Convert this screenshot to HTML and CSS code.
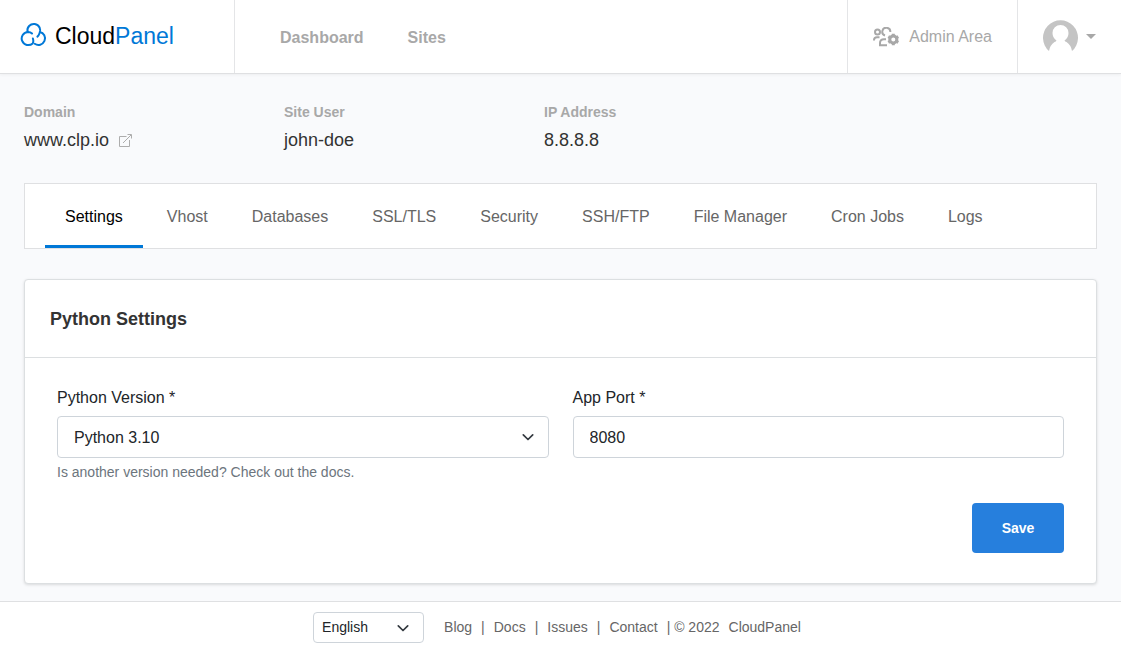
FILE: index.html
```html
<!DOCTYPE html>
<html lang="en">
<head>
<meta charset="utf-8">
<meta name="viewport" content="width=device-width, initial-scale=1">
<title>CloudPanel - Python Settings</title>
<link rel="stylesheet" href="styles.css">
</head>
<body>
<header class="header">
  <a class="logo" href="#">
    <svg class="logo-icon" viewBox="0 0 28 26" fill="none" stroke="#0078d7" stroke-width="2" stroke-linecap="round" aria-hidden="true">
      <path d="M7.600 9.800A6.400 6.400 0 1 1 19.400 11.500Q18.800 13.500 17.400 14.600"/>
      <path d="M12 11.500Q10.500 9.900 8 9.900A6.600 6.600 0 1 0 12.700 21.400Q13.800 19.500 12.900 16.500"/>
      <path d="M19.800 9.900A6.600 6.600 0 1 1 14.700 21.800"/>
    </svg>
    <span class="logo-text">Cloud<span class="logo-accent">Panel</span></span>
  </a>
  <nav class="main-nav">
    <a href="#">Dashboard</a>
    <a href="#">Sites</a>
  </nav>
  <a class="admin-link" href="#">
    <svg class="admin-icon" viewBox="0 0 27 20" fill="none" stroke="#a8a8a8" stroke-width="2" aria-hidden="true">
      <circle cx="4.500" cy="5" r="2.500"/>
      <path d="M1 13.500V13Q1 10.200 4 10.200H6.500"/>
      <path d="M12 8.500A4 4 0 1 1 17.300 5"/>
      <path d="M14 18.200H7V16Q7 12.200 11 12.200H13"/>
      <circle cx="20.300" cy="12.500" r="3.500" stroke-width="3"/>
      <path d="M20.300 6.800V9M20.300 16V18.200M15.300 9.600L17.300 10.800M23.300 14.200L25.300 15.400M15.300 15.400L17.300 14.200M23.300 10.800L25.300 9.600" stroke-width="3"/>
    </svg>
    <span>Admin Area</span>
  </a>
  <button class="user-menu" type="button" aria-label="User menu">
    <svg class="avatar" viewBox="0 0 35 36" aria-hidden="true">
      <path d="M6 32A17.500 17.500 0 1 1 29 32Q28 26 23.500 23Q22 22.500 21.500 21.500Q25.500 19 25.500 14A8 8 0 0 0 9.500 14Q9.500 19 13.500 21.500Q13 22.500 11.500 23Q7 26 6 32Z" fill="#c4c4c4"/>
    </svg>
    <span class="caret"></span>
  </button>
</header>

<main class="content">
  <dl class="site-info">
    <div>
      <dt>Domain</dt>
      <dd>www.clp.io
        <a class="external" href="#" aria-label="Open site"><svg viewBox="0 0 13 13" fill="none" stroke="#adadad" aria-hidden="true"><path d="M7.500 2.500H.5V12.500H10.500V6M4 9L12 1M8.500.500H12.500V4.500"/></svg></a>
      </dd>
    </div>
    <div>
      <dt>Site User</dt>
      <dd>john-doe</dd>
    </div>
    <div>
      <dt>IP Address</dt>
      <dd>8.8.8.8</dd>
    </div>
  </dl>

  <nav class="tabs">
    <a class="active" href="#" aria-current="page">Settings</a>
    <a href="#">Vhost</a>
    <a href="#">Databases</a>
    <a href="#">SSL/TLS</a>
    <a href="#">Security</a>
    <a href="#">SSH/FTP</a>
    <a href="#">File Manager</a>
    <a href="#">Cron Jobs</a>
    <a href="#">Logs</a>
  </nav>

  <section class="card">
    <h1 class="card-title">Python Settings</h1>
    <form class="card-body">
      <div class="fields">
        <div class="field">
          <label for="version">Python Version *</label>
          <div class="select-wrap">
            <select class="control" id="version"><option>Python 3.10</option></select>
            <svg class="chevron" viewBox="0 0 12 12" fill="none" stroke="#343a40" stroke-width="1.700" stroke-linecap="round" stroke-linejoin="round" aria-hidden="true"><path d="M1.300 3.800L6 8.500L10.700 3.800"/></svg>
          </div>
          <p class="help">Is another version needed? Check out the docs.</p>
        </div>
        <div class="field">
          <label for="port">App Port *</label>
          <input class="control" id="port" type="text" value="8080">
        </div>
      </div>
      <button class="save" type="button">Save</button>
    </form>
  </section>
</main>

<footer class="footer">
  <div class="select-wrap language">
    <select class="control" aria-label="Language"><option>English</option></select>
    <svg class="chevron" viewBox="0 0 12 12" fill="none" stroke="#343a40" stroke-width="1.700" stroke-linecap="round" stroke-linejoin="round" aria-hidden="true"><path d="M1.300 3.800L6 8.500L10.700 3.800"/></svg>
  </div>
  <div class="footer-links">
    <a href="#">Blog</a><span>|</span>
    <a href="#">Docs</a><span>|</span>
    <a href="#">Issues</a><span>|</span>
    <a href="#">Contact</a>
    <span class="copyright">| © 2022</span>
    <a href="#">CloudPanel</a>
  </div>
</footer>
</body>
</html>
```

FILE: styles.css
```css
* {
  box-sizing: border-box;
}

body {
  margin: 0;
  min-height: 100vh;
  display: flex;
  flex-direction: column;
  background: #f9fafc;
  color: #212529;
  font: 16px/24px "Liberation Sans", Arial, sans-serif;
}

a {
  color: inherit;
  text-decoration: none;
}

button,
input,
select {
  font: inherit;
  color: inherit;
}

.header {
  display: flex;
  height: 74px;
  background: #fff;
  border-bottom: 1px solid #dfe0e2;
  box-shadow: 0 1px 3px rgba(0, 0, 0, 0.05);
}

.logo {
  display: flex;
  align-items: center;
  gap: 7px;
  width: 235px;
  padding-left: 20px;
  border-right: 1px solid #e4e5e7;
}

.logo-icon {
  width: 28px;
  height: 26px;
  margin-bottom: 4px;
}

.logo-text {
  padding-bottom: 2px;
  color: #000;
  font-size: 23px;
}

.logo-accent {
  color: #0078d7;
}

.main-nav {
  flex: 1;
  display: flex;
  align-items: center;
  gap: 44px;
  padding: 2px 0 0 45px;
  color: #a8a8a8;
  font-weight: bold;
}

.admin-link {
  display: flex;
  align-items: center;
  gap: 9px;
  padding: 0 25px;
  border: solid #e4e5e7;
  border-width: 0 1px;
  color: #a8a8a8;
}

.admin-icon {
  width: 27px;
  height: 20px;
}

.user-menu {
  display: flex;
  align-items: center;
  gap: 8px;
  padding: 0 25px;
  border: 0;
  background: none;
}

.avatar {
  width: 35px;
  height: 36px;
}

.caret {
  border: 5px solid transparent;
  border-top-color: #a8a8a8;
  border-bottom: 0;
}

.content {
  flex: 1;
  padding: 26px 24px 16px;
}

.site-info {
  display: grid;
  grid-template-columns: repeat(auto-fill, 260px);
  margin: 0 0 29px;
}

.site-info dt {
  color: #a8a8a8;
  font-size: 14px;
  font-weight: bold;
}

.site-info dd {
  margin: 0;
  padding: 4px 0 2px;
  color: #333;
  font-size: 18px;
}

.external svg {
  width: 13px;
  height: 13px;
  margin-left: 5px;
  vertical-align: -1px;
}

.tabs {
  display: flex;
  gap: 4px;
  padding: 0 20px;
  background: #fff;
  border: 1px solid #dfe0e2;
  color: #666;
}

.tabs a {
  padding: 21px 20px 16px;
  border-bottom: 3px solid transparent;
}

.tabs .active {
  color: #000;
  border-bottom-color: #0078d7;
}

.card {
  margin-top: 30px;
  background: #fff;
  border: 1px solid #dcdfe1;
  border-radius: 4px;
  box-shadow: 0 1px 3px rgba(0, 0, 0, 0.13);
}

.card-title {
  margin: 0;
  padding: 27px 25px 26px;
  border-bottom: 1px solid #dcdfe1;
  color: #333;
  font-size: 18px;
  line-height: 24px;
}

.card-body {
  display: flex;
  flex-direction: column;
  padding: 28px 32px 30px;
}

.fields {
  display: grid;
  grid-template-columns: 1fr 1fr;
  gap: 24px;
}

.field label {
  display: block;
  margin-bottom: 6px;
}

.control {
  display: block;
  width: 100%;
  height: 42px;
  padding: 2px 16px 0;
  background: #fff;
  border: 1px solid #ced4da;
  border-radius: 4px;
  appearance: none;
}

.select-wrap {
  position: relative;
}

.chevron {
  position: absolute;
  right: 15px;
  top: 50%;
  width: 12px;
  height: 12px;
  margin-top: -6px;
  pointer-events: none;
}

.help {
  margin: 4px 0 0;
  color: #6c757d;
  font-size: 14px;
  line-height: 21px;
}

.save {
  align-self: flex-end;
  width: 92px;
  height: 50px;
  margin-top: 20px;
  background: #267fdd;
  border: 0;
  border-radius: 4px;
  color: #fff;
  font-size: 14px;
  font-weight: bold;
}

.footer {
  display: flex;
  justify-content: center;
  align-items: center;
  gap: 20px;
  height: 52px;
  padding-right: 7px;
  background: #fff;
  border-top: 1px solid #dfe0e2;
  color: #666;
  font-size: 14px;
}

.language {
  width: 111px;
}

.language .control {
  height: 31px;
  padding: 0 8px 1px;
  color: #212529;
}

.footer-links {
  display: flex;
  gap: 9px;
  padding-bottom: 2px;
}
```
